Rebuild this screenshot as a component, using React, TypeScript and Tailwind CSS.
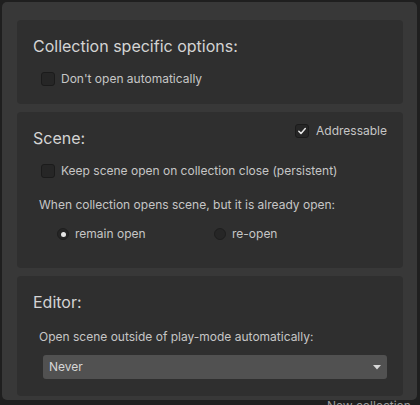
import React, { useState } from "react";

const font = { fontFamily: "Inter, 'Noto Sans', sans-serif" };

function Check({ checked }: { checked?: boolean }) {
  return (
    <span className="w-[14px] h-[14px] shrink-0 rounded-[3px] bg-[#262626] border border-[#1b1b1b] flex items-center justify-center">
      {checked && (
        <svg width="10" height="10" viewBox="0 0 10 10" fill="none">
          <path d="M1.8 5.2 L4 7.4 L8.3 2.6" stroke="#e8e8e8" strokeWidth="1.5" strokeLinecap="round" strokeLinejoin="round" />
        </svg>
      )}
    </span>
  );
}

function Radio({ on }: { on?: boolean }) {
  return (
    <span className="w-[12px] h-[12px] shrink-0 rounded-full bg-[#262626] border border-[#1e1e1e] flex items-center justify-center">
      {on && <span className="w-[5px] h-[5px] rounded-full bg-[#e6e6e6]"></span>}
    </span>
  );
}

export default function App() {
  const [dontOpen, setDontOpen] = useState(false);
  const [addressable, setAddressable] = useState(true);
  const [keepOpen, setKeepOpen] = useState(false);
  const [mode, setMode] = useState("remain");

  return (
    <div className="w-[420px] h-[405px] bg-[#1f1f1f] overflow-hidden" style={font}>
      <div className="relative z-10 ml-[2px] mt-[2px] w-[415px] h-[398px] bg-[#383838] rounded-[5px] pl-[15px] pr-[14px] pt-[18px] flex flex-col gap-[8px]">
        <div className="h-[84px] bg-[#2f2f2f] rounded-[4px] px-4 pt-[15px]">
          <div className="text-[16px] leading-[22px] text-[#d4d4d4]">Collection specific options:</div>
          <button className="mt-[15px] ml-[8px] flex items-center gap-[6px]" onClick={() => setDontOpen(!dontOpen)}>
            <Check checked={dontOpen} />
            <span className="text-[12px] leading-[14px] text-[#c6c6c6]">Don't open automatically</span>
          </button>
        </div>

        <div className="h-[156px] bg-[#2f2f2f] rounded-[4px] px-4 pt-[12px]">
          <div className="flex justify-between items-start">
            <div className="mt-[3px] text-[16px] leading-[22px] text-[#d4d4d4]">Scene:</div>
            <button className="flex items-center gap-[7px]" onClick={() => setAddressable(!addressable)}>
              <Check checked={addressable} />
              <span className="text-[12px] leading-[14px] text-[#c6c6c6]">Addressable</span>
            </button>
          </div>
          <button className="mt-[15px] ml-[8px] flex items-center gap-[6px]" onClick={() => setKeepOpen(!keepOpen)}>
            <Check checked={keepOpen} />
            <span className="text-[12px] leading-[14px] text-[#c6c6c6]">Keep scene open on collection close (persistent)</span>
          </button>
          <div className="mt-[18px] ml-[6px] text-[12px] leading-[18px] text-[#c6c6c6]">
            When collection opens scene, but it is already open:
          </div>
          <div className="mt-[11px] ml-[24px] flex items-center h-[18px]">
            <button className="w-[157px] flex items-center gap-[6px]" onClick={() => setMode("remain")}>
              <Radio on={mode === "remain"} />
              <span className="text-[12px] text-[#c6c6c6]">remain open</span>
            </button>
            <button className="flex items-center gap-[6px]" onClick={() => setMode("reopen")}>
              <Radio on={mode === "reopen"} />
              <span className="text-[12px] text-[#c6c6c6]">re-open</span>
            </button>
          </div>
        </div>

        <div className="h-[120px] bg-[#2f2f2f] rounded-[4px] px-4 pt-[15px]">
          <div className="text-[16px] leading-[22px] text-[#d4d4d4]">Editor:</div>
          <div className="mt-[15px] ml-[6px] text-[12px] leading-[18px] text-[#c6c6c6]">
            Open scene outside of play-mode automatically:
          </div>
          <div className="mt-[9px] ml-[10px] h-[24px] rounded-[3px] bg-[#515151] flex items-center justify-between pl-[6px] pr-[6px]">
            <span className="text-[12px] text-[#d6d6d6]">Never</span>
            <svg width="8" height="5" viewBox="0 0 8 5">
              <path d="M0 0 H8 L4 4.5 Z" fill="#d8d8d8" />
            </svg>
          </div>
        </div>
      </div>
      <div className="-mt-[1px] pl-[327px] text-[12px] leading-[14px] text-[#9a9a9a]">New collection</div>
    </div>
  );
}
